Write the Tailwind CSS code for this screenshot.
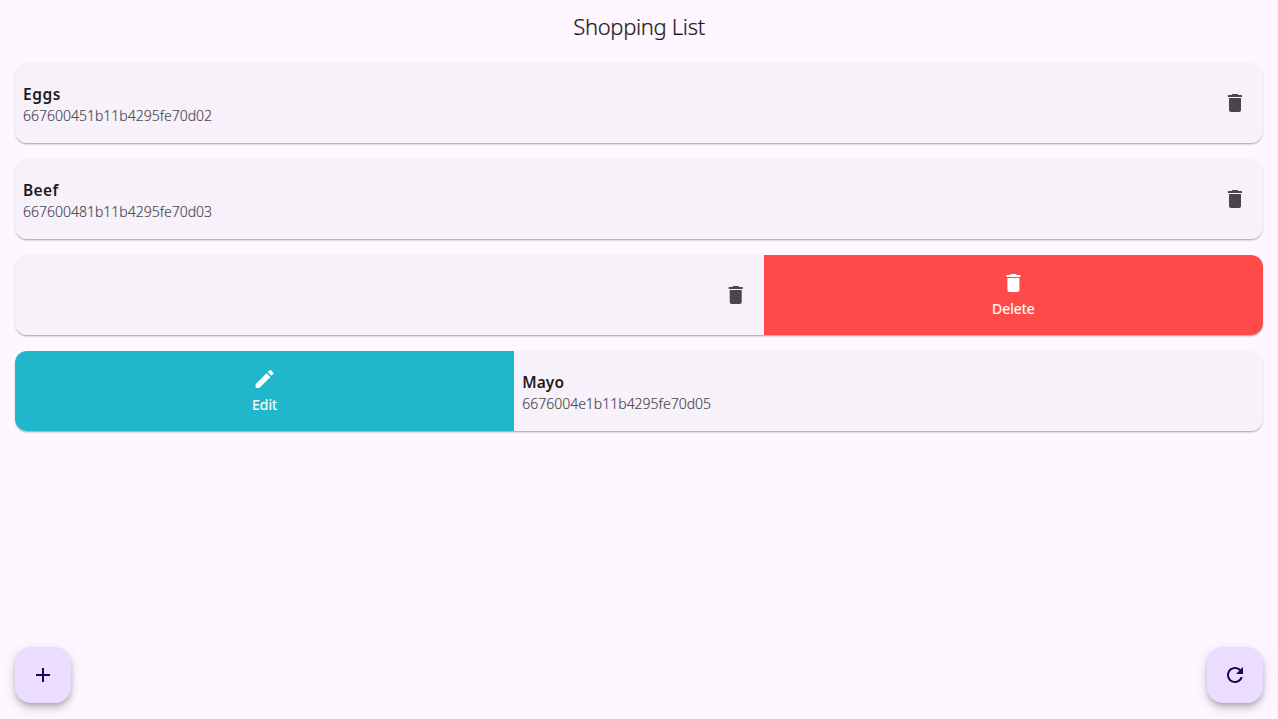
<!DOCTYPE html>
<html lang="en">
<head>
<meta charset="utf-8">
<title>Shopping List</title>
<script src="https://cdn.jsdelivr.net/npm/@tailwindcss/browser@4"></script>
</head>
<body class="bg-[#fef7ff] font-['Noto_Sans','Open_Sans',sans-serif] text-[#1d1b20]">
<svg class="hidden">
  <symbol id="trash" viewBox="0 0 24 24"><path d="M6 19c0 1.1.9 2 2 2h8c1.1 0 2-.9 2-2V7H6v12zM19 4h-3.5l-1-1h-5l-1 1H5v2h14V4z"/></symbol>
</svg>
<div class="flex h-[719px] flex-col overflow-hidden">
  <header class="flex h-14 shrink-0 items-center justify-center pb-1">
    <h1 class="text-[22px] leading-7 font-light tracking-[-0.33px] whitespace-nowrap [-webkit-text-stroke:0.2px_#1d1b20]">Shopping List</h1>
  </header>
  <main class="flex flex-1 flex-col gap-4 px-[15px] pt-[7px]">
    <div class="flex h-20 items-center justify-between rounded-xl bg-[#f7f2fa] pr-4 pl-2 shadow-[0_2px_2px_-1px_rgba(0,0,0,0.24),0_1px_2px_rgba(0,0,0,0.15)]">
      <div class="pt-0.5">
        <p class="text-[15.5px] leading-6 font-semibold tracking-[0.6px]">Eggs</p>
        <p class="text-sm leading-5 font-light text-[#49454f] [-webkit-text-stroke:0.15px_#49454f]">667600451b11b4295fe70d02</p>
      </div>
      <svg class="size-6 fill-[#49454f]"><use href="#trash"/></svg>
    </div>
    <div class="flex h-20 items-center justify-between rounded-xl bg-[#f7f2fa] pr-4 pl-2 shadow-[0_2px_2px_-1px_rgba(0,0,0,0.24),0_1px_2px_rgba(0,0,0,0.15)]">
      <div class="pt-0.5">
        <p class="text-[15.5px] leading-6 font-semibold tracking-[0.4px]">Beef</p>
        <p class="text-sm leading-5 font-light text-[#49454f] [-webkit-text-stroke:0.15px_#49454f]">667600481b11b4295fe70d03</p>
      </div>
      <svg class="size-6 fill-[#49454f]"><use href="#trash"/></svg>
    </div>
    <div class="flex h-20 rounded-xl bg-[#f7f2fa] shadow-[0_2px_2px_-1px_rgba(0,0,0,0.24),0_1px_2px_rgba(0,0,0,0.15)]">
      <div class="flex flex-1 items-center justify-end pr-4">
        <svg class="size-6 fill-[#49454f]" viewBox="0 0 24 24"><path transform="translate(-.3 0)" d="M6 19c0 1.1.9 2 2 2h8c1.1 0 2-.9 2-2V7H6v12zM19 4h-3.5l-1-1h-5l-1 1H5v2h14V4z"/></svg>
      </div>
      <div class="flex w-2/5 flex-col items-center justify-center gap-1 rounded-r-xl bg-[#fe4a49] text-white">
        <svg class="size-6 fill-white" viewBox="0 0 24 24"><path transform="translate(.4 0)" d="M6 19c0 1.1.9 2 2 2h8c1.1 0 2-.9 2-2V7H6v12zM19 4h-3.5l-1-1h-5l-1 1H5v2h14V4z"/></svg>
        <span class="text-sm leading-5 [-webkit-text-stroke:0.15px_white]">Delete</span>
      </div>
    </div>
    <div class="flex h-20 rounded-xl bg-[#f7f2fa] shadow-[0_2px_2px_-1px_rgba(0,0,0,0.24),0_1px_2px_rgba(0,0,0,0.15)]">
      <div class="flex w-2/5 flex-col items-center justify-center gap-1 rounded-l-xl bg-[#21b7ca] text-white">
        <svg class="size-6 fill-white" viewBox="0 0 24 24"><path transform="translate(-.4 0)" d="M3 17.25V21h3.75L17.81 9.94l-3.75-3.75L3 17.25zM20.71 7.04c.39-.39.39-1.02 0-1.41l-2.34-2.34c-.39-.39-1.02-.39-1.41 0l-1.83 1.83 3.75 3.75 1.83-1.83z"/></svg>
        <span class="text-sm leading-5 [-webkit-text-stroke:0.15px_white]">Edit</span>
      </div>
      <div class="flex flex-1 flex-col justify-center pt-0.5 pl-2">
        <p class="text-[15.5px] leading-6 font-semibold tracking-[0.1px]">Mayo</p>
        <p class="text-sm leading-5 font-light text-[#49454f] [-webkit-text-stroke:0.15px_#49454f]">6676004e1b11b4295fe70d05</p>
      </div>
    </div>
  </main>
  <footer class="flex justify-between px-[15px] pb-4">
    <button class="flex size-14 items-center justify-center rounded-2xl bg-[#eaddff] shadow-[0_3px_5px_-1px_rgba(0,0,0,0.2),0_6px_10px_rgba(0,0,0,0.14),0_1px_18px_rgba(0,0,0,0.06)]">
      <svg class="size-6 fill-[#21005d]" viewBox="0 0 24 24"><path d="M19 13h-6v6h-2v-6H5v-2h6V5h2v6h6v2z"/></svg>
    </button>
    <button class="flex size-14 items-center justify-center rounded-2xl bg-[#eaddff] shadow-[0_3px_5px_-1px_rgba(0,0,0,0.2),0_6px_10px_rgba(0,0,0,0.14),0_1px_18px_rgba(0,0,0,0.06)]">
      <svg class="size-6 fill-[#21005d]" viewBox="0 0 24 24"><path d="M17.65 6.35C16.2 4.9 14.21 4 12 4c-4.42 0-7.99 3.58-7.99 8s3.57 8 7.99 8c3.73 0 6.84-2.55 7.73-6h-2.08c-.82 2.33-3.04 4-5.65 4-3.31 0-6-2.69-6-6s2.69-6 6-6c1.66 0 3.14.69 4.22 1.78L13 11h7V4l-2.35 2.35z"/></svg>
    </button>
  </footer>
</div>
</body>
</html>
